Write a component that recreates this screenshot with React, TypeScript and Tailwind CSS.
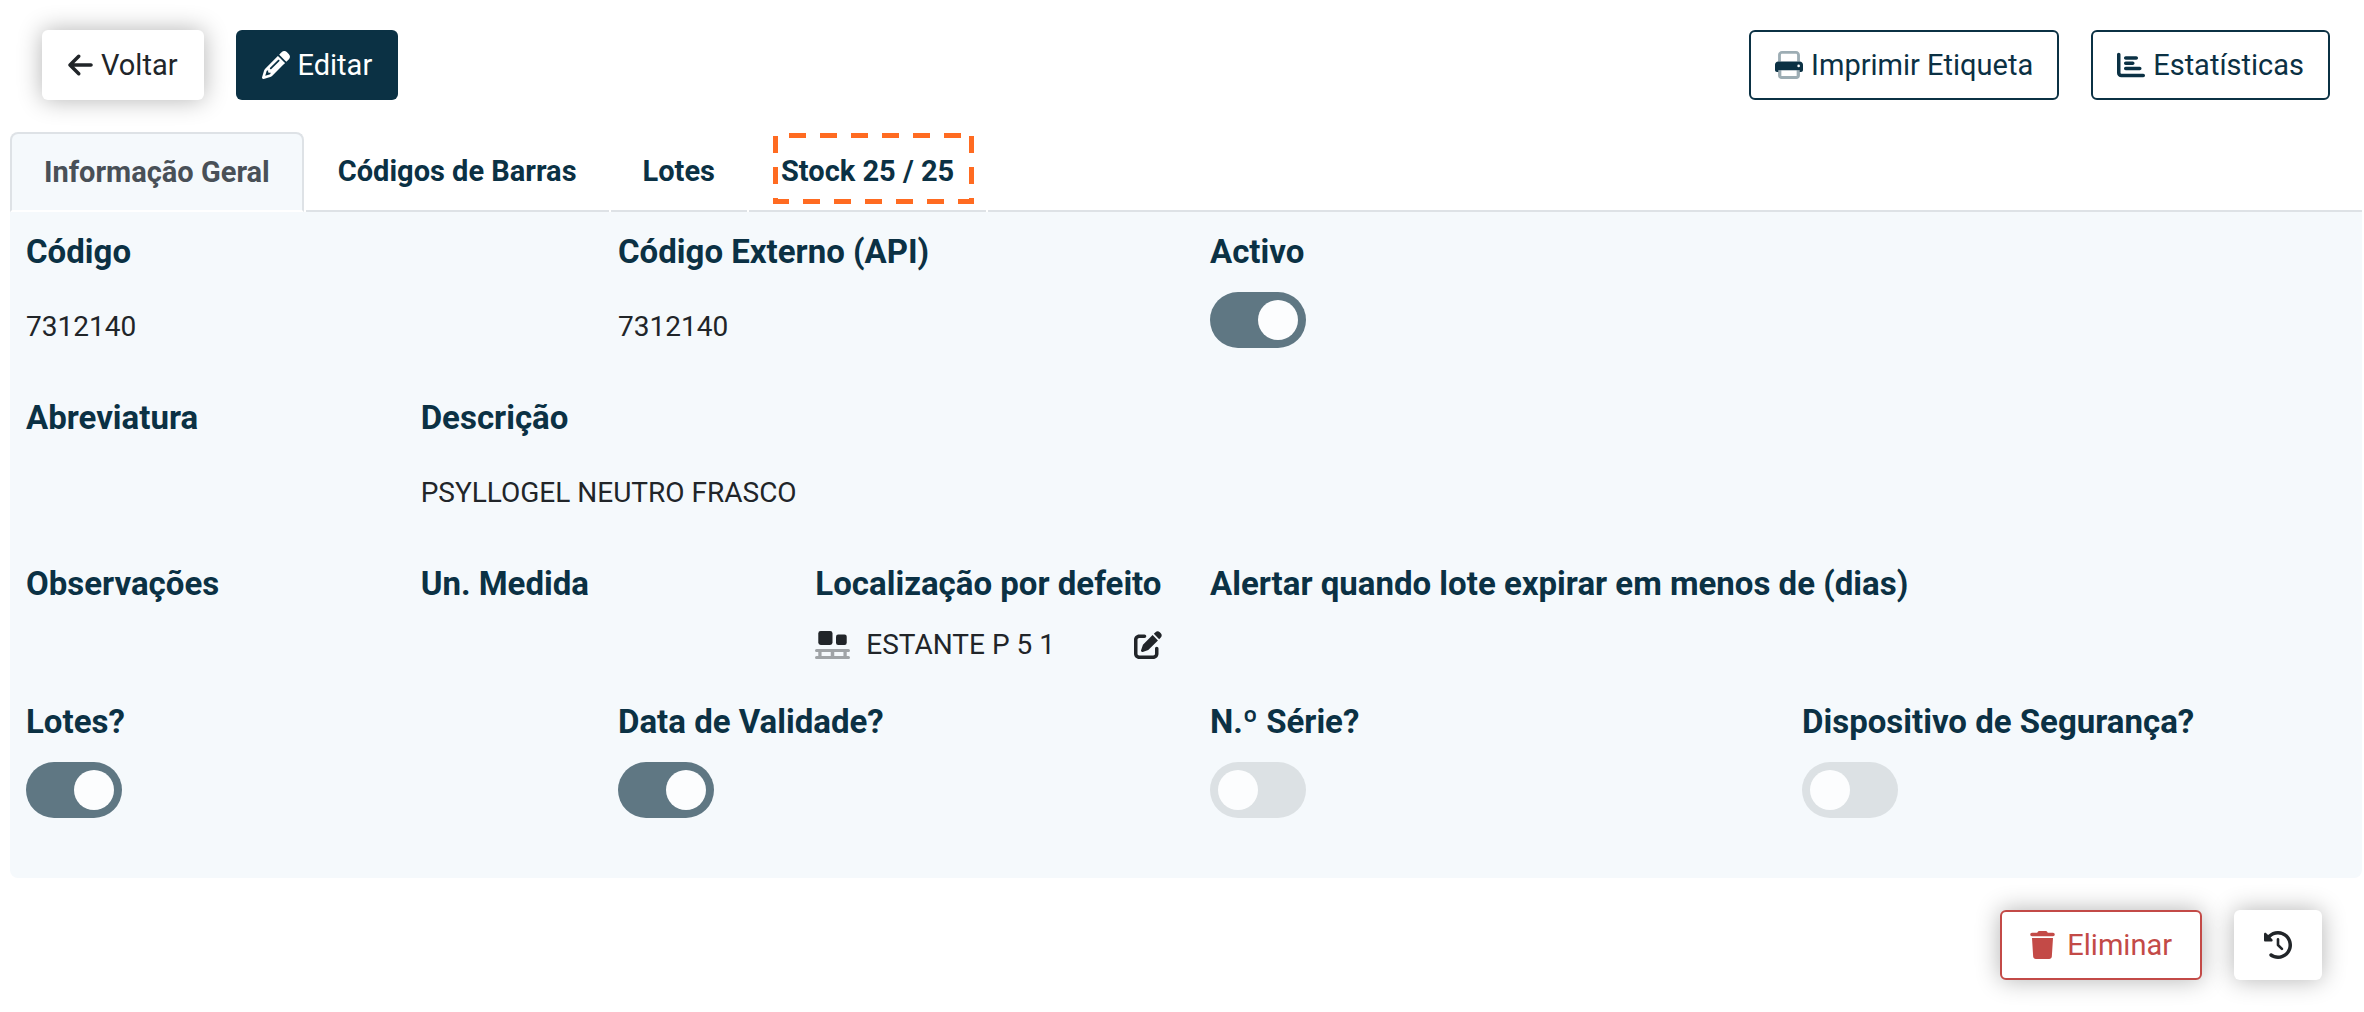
import type { ReactNode } from "react";
import {
  FaArrowLeft,
  FaChartBar,
  FaClockRotateLeft,
  FaPencil,
  FaPenToSquare,
  FaTrash,
} from "react-icons/fa6";

const PrintIcon = () => (
  <svg viewBox="0 0 512 512" className="size-7" fill="currentColor" aria-hidden>
    <path
      opacity=".4"
      d="M56 192V72C56 32 88 0 128 0h256c40 0 72 32 72 72v120h-52V76c0-14-10-24-24-24H132c-14 0-24 10-24 24v116zM56 352h60v104h280V352h60v96c0 36-28 64-64 64H120c-36 0-64-28-64-64z"
    />
    <path d="M60 192c-34 0-60 26-60 60v96c0 20 16 36 36 36h24v-32h392v32h24c20 0 36-16 36-36v-96c0-34-26-60-60-60zm372 56a24 24 0 1 1 0 48 24 24 0 1 1 0-48z" />
  </svg>
);

const PalletIcon = () => (
  <svg viewBox="0 0 640 512" className="h-7 w-[35px]" fill="currentColor" aria-hidden>
    <path
      opacity=".4"
      d="M28 328h584a28 28 0 0 1 0 56h-32v72h32a28 28 0 0 1 0 56H28a28 28 0 0 1 0-56h32v-72H28a28 28 0 0 1 0-56zm92 56v72h168v-72zm232 0v72h168v-72z"
    />
    <rect x="60" y="0" width="260" height="256" rx="44" />
    <rect x="384" y="64" width="196" height="192" rx="40" />
  </svg>
);

interface SwitchProps {
  id: string;
  checked?: boolean;
}

const Switch = ({ id, checked = false }: SwitchProps) => (
  <div className="relative mt-4 h-14 w-24">
    <input
      id={id}
      type="checkbox"
      role="switch"
      defaultChecked={checked}
      className="peer h-14 w-24 cursor-pointer appearance-none rounded-full bg-[#dce1e4] checked:bg-[#5f7783]"
    />
    <span className="pointer-events-none absolute top-2 left-2 size-10 rounded-full bg-[#fcfdfe] peer-checked:left-12" />
  </div>
);

const labelClass = "block text-[33px] leading-[48px] font-bold text-[#0b3144]";

interface FieldProps {
  label: string;
  className: string;
  children?: ReactNode;
}

const Field = ({ label, className, children }: FieldProps) => (
  <div className={className}>
    <p className={labelClass}>{label}</p>
    {children}
  </div>
);

const Value = ({ children }: { children: ReactNode }) => (
  <p className="mt-[30px] text-[28px] leading-[42px]">{children}</p>
);

interface SwitchFieldProps extends SwitchProps {
  label: string;
}

const SwitchField = ({ label, id, checked }: SwitchFieldProps) => (
  <div className="col-span-3">
    <label htmlFor={id} className={labelClass}>
      {label}
    </label>
    <Switch id={id} checked={checked} />
  </div>
);

const tabClass =
  "border-b-2 border-[#dee2e6] px-8 text-[29px] leading-[42px] font-bold whitespace-nowrap text-[#0b3144]";
const buttonClass =
  "flex h-[70px] items-center rounded-md text-[29px] leading-[42px] whitespace-nowrap";

const App = () => {
  return (
    <div className="overflow-x-clip bg-white pb-8 pl-[10px] pr-[2px] font-['Roboto',sans-serif] text-[#212529]">
      <header className="flex items-start justify-between pt-[30px] pr-8 pl-8">
        <div className="flex gap-8">
          <button className={`${buttonClass} gap-2 bg-white px-[26px] shadow-[0_0_24px_rgba(0,0,0,0.3)]`}>
            <FaArrowLeft className="h-7 w-[25px]" />
            Voltar
          </button>
          <button className={`${buttonClass} gap-2 bg-[#0b3144] px-[26px] text-white`}>
            <FaPencil className="size-7" />
            Editar
          </button>
        </div>
        <div className="flex gap-8">
          <button className={`${buttonClass} gap-2 border-2 border-[#0b3144] bg-white px-6 text-[#0b3144]`}>
            <PrintIcon />
            Imprimir Etiqueta
          </button>
          <button className={`${buttonClass} gap-2 border-2 border-[#0b3144] bg-white px-6 text-[#0b3144]`}>
            <FaChartBar className="size-7" />
            Estatísticas
          </button>
        </div>
      </header>

      <nav role="tablist" className="mt-8 flex h-20 gap-[2px]">
        <button
          role="tab"
          aria-selected="true"
          className="rounded-t-lg border-2 border-[#dee2e6] border-b-white bg-[#f5f9fc] px-8 text-[29px] leading-[42px] font-bold whitespace-nowrap text-[#495057]"
        >
          Informação Geral
        </button>
        <button role="tab" className={tabClass}>
          Códigos de Barras
        </button>
        <button role="tab" className={tabClass}>
          Lotes
        </button>
        <button role="tab" className={`${tabClass} relative`}>
          Stock 25 / 25
          <svg className="absolute top-px left-6 h-[71px] w-[201px]" fill="none" aria-hidden>
            <path
              d="M198.5 3V68.5H2.5V2.5H198.5"
              stroke="#ff6b21"
              strokeWidth="5"
              strokeDasharray="17 14"
            />
          </svg>
        </button>
        <div className="flex-1 border-b-2 border-[#dee2e6]" />
      </nav>

      <main className="overflow-clip rounded-b-lg bg-[#f5f9fc] pt-4 pb-[60px] pl-4">
        <div className="-mr-8 grid grid-cols-12 pb-[46px]">
          <Field label="Código" className="col-span-3">
            <Value>7312140</Value>
          </Field>
          <Field label="Código Externo (API)" className="col-span-3">
            <Value>7312140</Value>
          </Field>
          <SwitchField label="Activo" id="activo" checked />
        </div>

        <div className="-mr-8 grid grid-cols-12 pb-[46px]">
          <Field label="Abreviatura" className="col-span-2" />
          <Field label="Descrição" className="col-span-10">
            <Value>PSYLLOGEL NEUTRO FRASCO</Value>
          </Field>
        </div>

        <div className="-mr-8 grid grid-cols-12 pb-8">
          <Field label="Observações" className="col-span-2" />
          <Field label="Un. Medida" className="col-span-2" />
          <Field label="Localização por defeito" className="col-span-2 whitespace-nowrap">
            <div className="mt-4 mr-12 flex items-center gap-4 text-[28px] leading-[42px]">
              <PalletIcon />
              ESTANTE P 5 1
              <button aria-label="Editar localização" className="ml-auto">
                <FaPenToSquare className="size-7" />
              </button>
            </div>
          </Field>
          <Field label="Alertar quando lote expirar em menos de (dias)" className="col-span-6" />
        </div>

        <div className="-mr-8 grid grid-cols-12">
          <SwitchField label="Lotes?" id="lotes" checked />
          <SwitchField label="Data de Validade?" id="validade" checked />
          <SwitchField label="N.º Série?" id="serie" />
          <SwitchField label="Dispositivo de Segurança?" id="seguranca" />
        </div>
      </main>

      <footer className="mt-8 flex justify-end gap-8 pr-10">
        <button
          className={`${buttonClass} gap-3 border-2 border-[#c34a47] bg-white px-7 text-[#c34a47] shadow-[0_0_24px_rgba(0,0,0,0.3)]`}
        >
          <FaTrash className="h-7 w-[25px]" />
          Eliminar
        </button>
        <button
          aria-label="Histórico"
          className={`${buttonClass} bg-white px-[30px] shadow-[0_0_24px_rgba(0,0,0,0.3)]`}
        >
          <FaClockRotateLeft className="size-7" />
        </button>
      </footer>
    </div>
  );
};

export default App;
